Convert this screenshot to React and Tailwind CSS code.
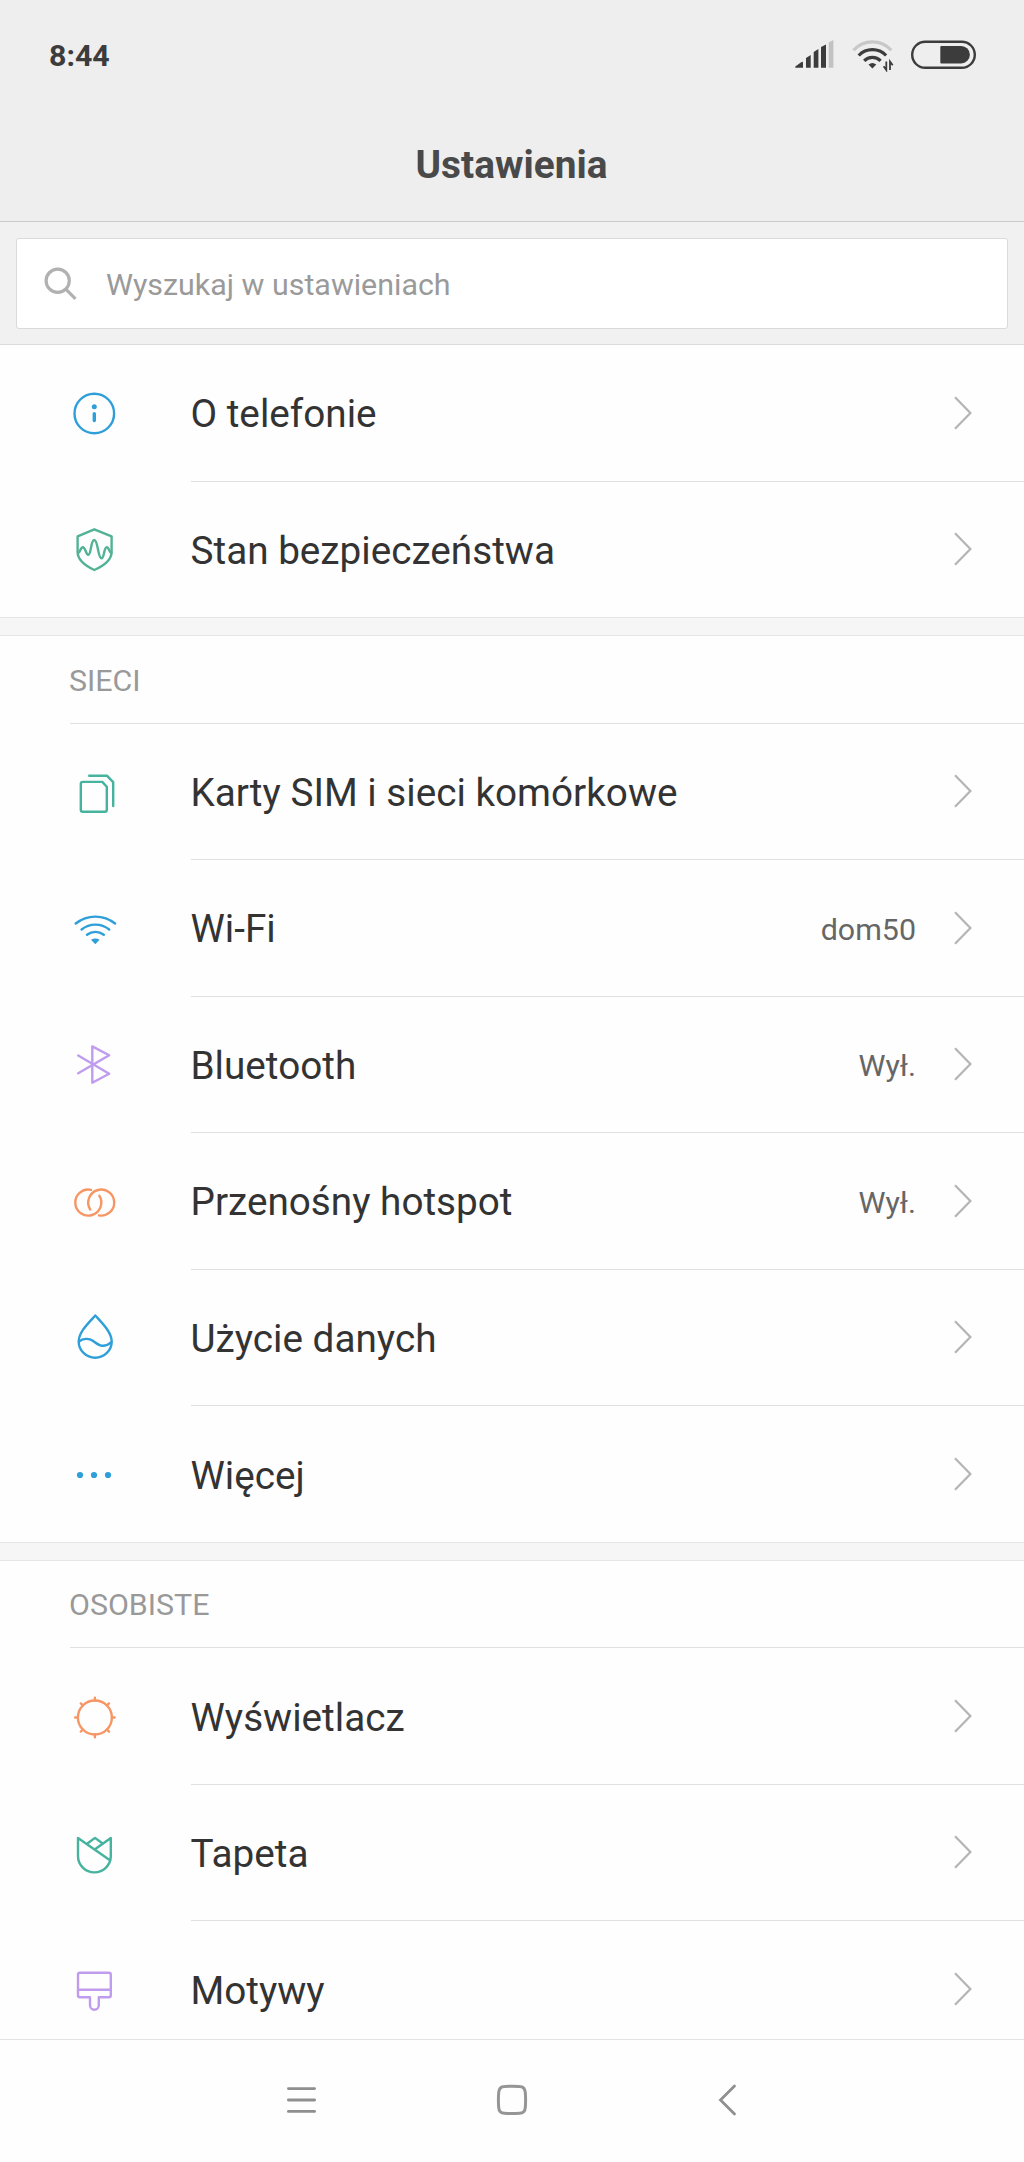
import React from "react";

const BLUE = "#2e9fd8";
const GREEN = "#45b39d";
const PURPLE = "#bf9cee";
const ORANGE = "#f79665";

function Icon({ color, children }) {
  return (
    <svg
      width="48"
      height="48"
      viewBox="0 0 48 48"
      fill="none"
      stroke={color}
      strokeWidth="2.4"
      strokeLinecap="round"
      strokeLinejoin="round"
      className="mt-px shrink-0"
    >
      {children}
    </svg>
  );
}

const InfoIcon = () => (
  <Icon color={BLUE}>
    <circle cx="24.3" cy="23.5" r="19.8" />
    <circle cx="24.3" cy="16.8" r="2.5" fill={BLUE} stroke="none" />
    <path d="M24.3 23.8v6.8" strokeWidth="3.4" />
  </Icon>
);

const ShieldIcon = () => (
  <Icon color="#52b295">
    <path d="M24.3 3.300 41.600 10.300V26c0 7-5.200 12.600-17.300 18C12.900 38.600 7.600 33 7.600 26V10.300Z" />
    <path d="M8.300 27.100C10 27 10.400 21.200 12.900 21.200s3 7.600 5.400 7.600c3 0 2.300-14.800 6-14.800s3.600 18.400 7.200 18.400c2.900 0 2.300-11.200 5.200-11.200 2.300 0 2.700 5.600 4.600 5.900" />
  </Icon>
);

const SimIcon = () => (
  <Icon color={GREEN}>
    <path d="M12.800 13.900h19.500l4.500 4.900v22.900a2 2 0 0 1-2 2h-22a2 2 0 0 1-2-2V15.900a2 2 0 0 1 2-2Z" />
    <path d="M19.200 7.800h17.900l6.100 6.300v24" />
  </Icon>
);

const WifiIcon = () => (
  <Icon color={BLUE}>
    <path d="M5.700 18.500a31.500 31.500 0 0 1 39.400 0" />
    <path d="M11.600 24.500a22 22 0 0 1 27.600 0" />
    <path d="M17 29.700a14 14 0 0 1 16.800 0" />
    <path d="M21 34.800c2.600-1.600 6-1.600 8.600 0L25.300 39.200Z" fill={BLUE} stroke="none" />
  </Icon>
);

const BluetoothIcon = () => (
  <Icon color={PURPLE}>
    <path d="M8.200 14.500 39.200 32.800 22.300 41.800V5.400l16.900 8.800L8.200 32.300" />
  </Icon>
);

const HotspotIcon = () => (
  <Icon color={ORANGE}>
    <path d="M21 11.880A13 13 0 1 0 29.300 17.670" />
    <path d="M20.200 31.500A13 13 0 1 1 29 37.400" />
  </Icon>
);

const DropIcon = () => (
  <Icon color={BLUE}>
    <path d="M25.300 1.500C19 8.500 8.700 18 8.700 27.400a16.500 16.300 0 0 0 33 0C41.700 18 31.500 8.500 25.300 1.500Z" />
    <path d="M9.300 27.300c3-2.600 9.500-3.600 13.500-.5 5.500 4.200 10.500 8 18.300 1.500" />
  </Icon>
);

const MoreIcon = () => (
  <Icon color={BLUE}>
    <g fill={BLUE} stroke="none">
      <circle cx="10" cy="24" r="3.1" />
      <circle cx="24" cy="24" r="3.1" />
      <circle cx="38" cy="24" r="3.1" />
    </g>
  </Icon>
);

const SunIcon = () => (
  <Icon color={ORANGE}>
    <circle cx="24.9" cy="24.5" r="17" />
    <path d="M24.900 7.500V4.800M24.900 41.500v2.700M7.900 24.500H5.200M41.900 24.500h2.700M12.900 12.500l-2.100-2.100M36.900 12.500l2.100-2.100M12.900 36.500l-2.100 2.100M36.900 36.500l2.100 2.100" />
  </Icon>
);

const TulipIcon = () => (
  <Icon color={GREEN}>
    <path d="M39.600 30.900 8 8.900V27a16.400 16.400 0 0 0 32.800 0V8.900L25 20.200" />
    <path d="M17.700 14.300 25 8.900l7.300 5.400" />
  </Icon>
);

const BrushIcon = () => (
  <Icon color={PURPLE}>
    <path d="M20 31.300H10a2 2 0 0 1-2-2V8.800a2 2 0 0 1 2-2h28.800a2 2 0 0 1 2 2v20.500a2 2 0 0 1-2 2H28.800v8a4.400 4.400 0 0 1-8.800 0ZM8 23.700h32.800" />
  </Icon>
);

const sections = [
  {
    title: null,
    items: [
      { label: "O telefonie", icon: InfoIcon },
      { label: "Stan bezpieczeństwa", icon: ShieldIcon },
    ],
  },
  {
    title: "SIECI",
    items: [
      { label: "Karty SIM i sieci komórkowe", icon: SimIcon },
      { label: "Wi-Fi", icon: WifiIcon, value: "dom50" },
      { label: "Bluetooth", icon: BluetoothIcon, value: "Wył." },
      { label: "Przenośny hotspot", icon: HotspotIcon, value: "Wył." },
      { label: "Użycie danych", icon: DropIcon },
      { label: "Więcej", icon: MoreIcon },
    ],
  },
  {
    title: "OSOBISTE",
    items: [
      { label: "Wyświetlacz", icon: SunIcon },
      { label: "Tapeta", icon: TulipIcon },
      { label: "Motywy", icon: BrushIcon },
    ],
  },
];

function StatusBar() {
  return (
    <div className="flex h-[112px] items-center justify-between pl-[49px] pr-[48px]">
      <span className="text-[30.3px] font-bold leading-none text-[#3c3c3c]">
        8:44
      </span>
      <div className="flex h-8 items-start">
        {/* Signal strength */}
        <svg width="40" height="28" viewBox="0 0 40 28" fill="#3c3c3c">
          <path d="M0.300 27.700v-1.200l6.200-4.600q1.500-.7 1.500 1v4.800ZM11 27.700V18l4.700-3v12.700ZM18.700 27.700V12l4.700-3v18.700ZM26 27.700V7l5-2.500v23.200Z" />
          <path d="M33.700 27.700V2.500L38.400 0v27.700Z" fill="#c2c2c2" />
        </svg>
        {/* Wi-Fi with traffic arrows */}
        <svg
          width="44"
          height="32"
          viewBox="0 0 44 32"
          fill="none"
          stroke="#3c3c3c"
          strokeWidth="3.2"
          className="ml-[17px]"
        >
          <path d="M1.500 10.300a25.500 25.500 0 0 1 37.800 0" stroke="#c8c8c8" />
          <path d="M6.700 15.500a19 19 0 0 1 27.400 0" />
          <path d="M12.200 20.900a11.300 11.300 0 0 1 16.400 0" />
          <path d="M16.500 24.500q3.900-3.200 7.800 0l-3.900 4Z" fill="#3c3c3c" stroke="none" />
          <path d="M34.300 21.500v8.500l-2.700-3.700M38 30v-8.500l2.700 3.700" strokeWidth="1.8" />
        </svg>
        {/* Battery */}
        <svg width="65" height="29" viewBox="0 0 65 29" className="ml-[15px]">
          <rect
            x="1.2"
            y="1.7"
            width="62.6"
            height="26.1"
            rx="13.05"
            fill="none"
            stroke="#3c3c3c"
            strokeWidth="2.4"
          />
          <path
            d="M30.300 6h19.900a8.700 8.700 0 0 1 0 17.400H30.300a1 1 0 0 1-1-1V7a1 1 0 0 1 1-1Z"
            fill="#3c3c3c"
          />
        </svg>
      </div>
    </div>
  );
}

function Header() {
  return (
    <header className="h-[222px] border-b border-[#cacaca] bg-[#eeeeee]">
      <StatusBar />
      <h1 className="pr-px pt-[33px] text-center text-[38.8px] font-bold leading-[40px] text-[#494949]">
        Ustawienia
      </h1>
    </header>
  );
}

function SearchBar() {
  return (
    <div className="h-[123px] border-b border-[#dcdcdc] bg-[#f1f1f1] px-4 pt-4">
      <div className="flex h-[91px] items-center rounded-[3px] border border-[#dadada] bg-white pl-[27px]">
        <svg
          width="34"
          height="34"
          viewBox="0 0 34 34"
          fill="none"
          stroke="#b1b1b1"
          strokeWidth="3.2"
        >
          <circle cx="13.7" cy="13.7" r="11.6" />
          <path d="m22 22.300 9.500 9.500" />
        </svg>
        <span className="ml-[28px] pt-[3px] text-[30.4px] leading-none text-[#9a9a9a]">
          Wyszukaj w ustawieniach
        </span>
      </div>
    </div>
  );
}

function Chevron() {
  return (
    <svg
      width="18"
      height="34"
      viewBox="0 0 18 34"
      fill="none"
      stroke="#b4b4b4"
      strokeWidth="2.2"
    >
      <path d="M1 1.300 16.400 17 1 32.700" />
    </svg>
  );
}

function Row({ item, last }) {
  const RowIcon = item.icon;
  return (
    <div className="flex h-[136.53px] shrink-0 items-center pl-[70px]">
      <RowIcon />
      <div
        className={`ml-[73px] flex h-full flex-1 items-center border-b pr-[52px] ${
          last ? "border-transparent" : "border-[#e0e0e0]"
        }`}
      >
        <span className="-ml-[0.5px] flex-1 pt-[4px] text-[38.7px] leading-none text-[#333333]">
          {item.label}
        </span>
        {item.value && (
          <span className="mr-[38px] pt-[4px] text-[30.4px] leading-none text-[#666666]">
            {item.value}
          </span>
        )}
        <Chevron />
      </div>
    </div>
  );
}

function Section({ section, first }) {
  return (
    <section>
      {/* The gap's top border sits where the last row's divider would be */}
      {!first && (
        <div className="relative -mt-px h-[19px] border-y border-[#e6e6e6] bg-[#f6f6f6]" />
      )}
      {section.title && (
        <div className="pl-[70px]">
          <h2 className="flex h-[87.5px] items-center border-b border-[#e0e0e0] text-[30.4px] leading-none text-[#999999]">
            <span className="-ml-px pt-[3px]">{section.title}</span>
          </h2>
        </div>
      )}
      {section.items.map((item, i) => (
        <Row
          key={item.label}
          item={item}
          last={i === section.items.length - 1}
        />
      ))}
    </section>
  );
}

function NavBar() {
  return (
    <nav className="flex h-[123px] shrink-0 items-center border-t border-[#e4e4e4] bg-[#fefefe] pb-[2px] pl-[286px]">
      <svg
        width="31"
        height="32"
        viewBox="0 0 31 32"
        stroke="#8f8f8f"
        strokeWidth="2.8"
        strokeLinecap="round"
      >
        <path d="M2.400 4.600h26.200M2.400 16h26.200M2.400 27.400h26.200" />
      </svg>
      <svg
        width="32"
        height="32"
        viewBox="0 0 32 32"
        fill="none"
        stroke="#959595"
        strokeWidth="3"
        className="ml-[179px]"
      >
        <path d="M8.500 2.500Q16 1.900 23.500 2.500 29 2.700 29.300 8.500q.6 7.500 0 15-.3 5.500-5.800 5.800-7.500.6-15 0-5.500-.3-5.800-5.800-.6-7.500 0-15Q3 2.800 8.500 2.500Z" />
      </svg>
      <svg
        width="20"
        height="34"
        viewBox="0 0 20 34"
        fill="none"
        stroke="#8f8f8f"
        strokeWidth="2.8"
        strokeLinecap="round"
        className="ml-[190px]"
      >
        <path d="M16.500 3 2.500 17l14 14" />
      </svg>
    </nav>
  );
}

function App() {
  return (
    <div className="flex h-[2162px] w-[1024px] flex-col overflow-hidden bg-[#fefefe] font-[Roboto,sans-serif]">
      <Header />
      <SearchBar />
      <main className="min-h-0 flex-1 overflow-hidden">
        {sections.map((section, i) => (
          <Section key={i} section={section} first={i === 0} />
        ))}
      </main>
      <NavBar />
    </div>
  );
}

export default App;
